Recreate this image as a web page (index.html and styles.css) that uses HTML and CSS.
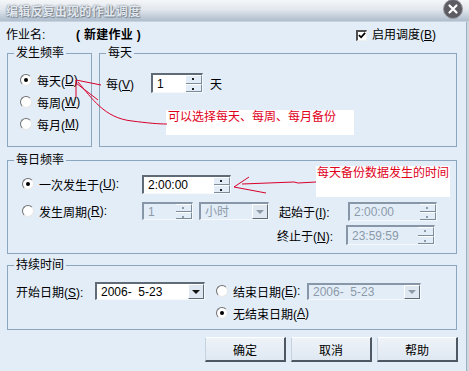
FILE: index.html
```html
<!DOCTYPE html>
<html lang="zh-CN">
<head>
<meta charset="UTF-8">
<title>编辑反复出现的作业调度</title>
<link rel="stylesheet" href="styles.css">
</head>
<body>
<div class="window">
    <div class="titlebar">
        <span class="title">编辑反复出现的作业调度</span>
        <span class="close">
            <svg width="20" height="20" viewBox="0 0 20 20">
                <circle cx="10" cy="10" r="9.5" fill="#5c5c62" stroke="#9a9aa2"/>
                <path d="M6.5 6.5 L13.5 13.5 M13.5 6.5 L6.5 13.5" stroke="#fff" stroke-width="2.2" stroke-linecap="round"/>
            </svg>
        </span>
    </div>

    <div class="name-row">
        <span>作业名:</span>
        <span class="name-value">(&nbsp;新建作业&nbsp;)</span>
        <span class="check-line">
            <span class="checkbox">
                <svg width="9" height="9" viewBox="0 0 9 9"><path d="M1 4 L3.5 6.5 L8 1.5" fill="none" stroke="#000" stroke-width="2"/></svg>
            </span>
            <span>启用调度(<u>B</u>)</span>
        </span>
    </div>

    <div class="section top-groups">
        <div class="group freq">
            <div class="group-title">发生频率</div>
            <div class="radio-list">
                <div class="radio-row"><span class="radio on"></span>每天(<u>D</u>)</div>
                <div class="radio-row"><span class="radio"></span>每周(<u>W</u>)</div>
                <div class="radio-row"><span class="radio"></span>每月(<u>M</u>)</div>
            </div>
        </div>
        <div class="group daily">
            <div class="group-title">每天</div>
            <div class="daily-row">
                <span class="every-label">每(<u>V</u>)</span>
                <div class="spin spin-day">
                    <span class="spin-val">1</span>
                    <span class="spin-btns"><i class="up"></i><i class="down"></i></span>
                </div>
                <span class="day-unit">天</span>
            </div>
        </div>
    </div>

    <div class="section group daily-freq">
        <div class="group-title">每日频率</div>
        <div class="freq-row row-a">
            <span class="radio-cell"><span class="radio on"></span>一次发生于(<u>U</u>):</span>
            <div class="spin spin-time">
                <span class="spin-val">2:00:00</span>
                <span class="spin-btns"><i class="up"></i><i class="down"></i></span>
            </div>
        </div>
        <div class="freq-row row-b">
            <span class="radio-cell"><span class="radio"></span>发生周期(<u>R</u>):</span>
            <div class="spin disabled spin-period">
                <span class="spin-val">1</span>
                <span class="spin-btns"><i class="up"></i><i class="down"></i></span>
            </div>
            <div class="combo disabled combo-unit">
                <span class="combo-val">小时</span>
                <span class="combo-btn"><i></i></span>
            </div>
            <span class="range-label">起始于(<u>I</u>):</span>
            <div class="spin disabled spin-range">
                <span class="spin-val">2:00:00</span>
                <span class="spin-btns"><i class="up"></i><i class="down"></i></span>
            </div>
        </div>
        <div class="freq-row row-c">
            <span class="range-label">终止于(<u>N</u>):</span>
            <div class="spin disabled spin-range tall">
                <span class="spin-val">23:59:59</span>
                <span class="spin-btns"><i class="up"></i><i class="down"></i></span>
            </div>
        </div>
    </div>

    <div class="section group duration">
        <div class="group-title">持续时间</div>
        <div class="dur-row">
            <span class="start-label">开始日期(<u>S</u>):</span>
            <div class="combo combo-start">
                <span class="combo-val">2006-&nbsp;&nbsp;5-23</span>
                <span class="combo-btn"><i></i></span>
            </div>
            <span class="radio-cell end-cell"><span class="radio"></span>结束日期(<u>E</u>):</span>
            <div class="combo disabled combo-end">
                <span class="combo-val">2006-&nbsp;&nbsp;5-23</span>
                <span class="combo-btn"><i></i></span>
            </div>
        </div>
        <div class="dur-row row-noend">
            <span class="radio-cell"><span class="radio on"></span>无结束日期(<u>A</u>)</span>
        </div>
    </div>

    <div class="buttons">
        <button class="btn">确定</button>
        <button class="btn">取消</button>
        <button class="btn">帮助</button>
    </div>

    <!-- red notes drawn over the dialog -->
    <div class="note note-one">可以选择每天、每周、每月备份</div>
    <div class="note note-two">每天备份数据发生的时间</div>
    <svg class="marks" width="469" height="371" viewBox="0 0 469 371">
        <g fill="none" stroke="#d8002a" stroke-width="1">
            <path d="M76 80 L76 97"/>
            <path d="M76 80 L101 85"/>
            <path d="M76 83 L98 100"/>
            <path d="M78 82 C92 98 104 118 132 121 C148 123 158 124 167 124"/>
            <path d="M234 187 L249 177"/>
            <path d="M234 187 L266 193"/>
            <path d="M242 184 L294 182 L298 183 L316 182"/>
        </g>
    </svg>
</div>
</body>
</html>
```

FILE: styles.css
```css
/* dialog look, XP style */
body {
    margin: 0;
    font-family: "Liberation Sans", "Noto Sans CJK SC", sans-serif;
    font-size: 12px;
    color: #000;
}
u {
    text-decoration: underline;
}
.window {
    position: relative;
    width: 469px;
    height: 371px;
    background: #e3edf8;
    box-shadow: inset -2px 0 #cdd6df, inset -3px 0 #9fb0c1;
    overflow: hidden;
}
.titlebar {
    height: 22px;
    display: flex;
    align-items: center;
    justify-content: space-between;
    background: linear-gradient(#f4f6f8, #e2e7ed 45%, #aebdcd);
    border-bottom: 1px solid #c8d3de;
    box-sizing: border-box;
}
.title {
    margin-left: 6px;
    font-weight: bold;
    color: #e3e8ee;
    text-shadow: 0 0 2px #5d6976, 1px 1px 1px #7f8d9b;
    letter-spacing: 0.2px;
}
.close {
    margin: -3px 6px 0 0;
    height: 20px;
}
.name-row {
    display: grid;
    grid-template-columns: 70px 280px auto;
    align-items: center;
    height: 26px;
    margin-bottom: 5px;
    padding-left: 6px;
    line-height: 14px;
}
.name-value {
    font-weight: bold;
    letter-spacing: 0.3px;
}
.check-line {
    display: flex;
    align-items: center;
    gap: 5px;
}
.checkbox {
    width: 11px;
    height: 11px;
    box-sizing: border-box;
    border-style: solid;
    border-width: 2px 1px 1px 2px;
    border-color: #4f4f4f #f0f0f0 #f0f0f0 #4f4f4f;
    background: #fff;
    display: flex;
    align-items: center;
    justify-content: center;
}
.section {
    margin-left: 7px;
    margin-right: 12px;
}
.group {
    border: 1px solid #8ca6be;
    box-sizing: border-box;
}
.group-title {
    width: fit-content;
    margin: -8px 0 0 6px;
    padding: 0 2px;
    height: 14px;
    line-height: 14px;
    background: #e3edf8;
}
.top-groups {
    display: flex;
    gap: 7px;
}
.freq {
    width: 85px;
    height: 94px;
}
.daily {
    width: 358px;
    height: 94px;
}
.radio-list {
    margin-top: 9px;
    padding-left: 12px;
}
.radio-row {
    height: 22px;
    display: flex;
    align-items: center;
}
.radio {
    position: relative;
    width: 12px;
    height: 12px;
    box-sizing: border-box;
    border-radius: 50%;
    border: 1px solid;
    border-color: #6f6f6f #e6e6e6 #e6e6e6 #6f6f6f;
    background: #fff;
    margin-right: 5px;
    flex: none;
}
.radio.on::after {
    content: "";
    position: absolute;
    left: 3px;
    top: 3px;
    width: 4px;
    height: 4px;
    border-radius: 50%;
    background: #000;
}
.daily-row {
    display: flex;
    align-items: center;
    height: 20px;
    margin-top: 13px;
    padding-left: 6px;
}
.every-label {
    width: 45px;
    flex: none;
}
.spin-day {
    width: 52px;
    height: 20px;
}
.day-unit {
    margin-left: 7px;
}

/* spin and combo fields */
.spin, .combo {
    display: flex;
    flex: none;
    box-sizing: border-box;
    background: #fff;
    border-style: solid;
    border-width: 2px 1px 1px 2px;
    border-color: #5f6b77 #f6f9fc #f6f9fc #5f6b77;
    line-height: 14px;
}
.spin-val, .combo-val {
    flex: 1;
    padding-left: 4px;
    display: flex;
    align-items: center;
    white-space: nowrap;
}
.spin-btns {
    width: 16px;
    display: flex;
    flex-direction: column;
    background: #e3edf8;
}
.spin-btns i {
    flex: 1;
    position: relative;
    border-bottom: 1px solid #7d8c9b;
    border-right: 1px solid #7d8c9b;
    border-top: 1px solid #fff;
}
.spin-btns i::after {
    content: "";
    position: absolute;
    left: 6px;
    top: 2px;
    width: 2px;
    height: 2px;
    background: #222;
}
.spin-btns .down::after {
    top: 3px;
}
.combo-btn {
    width: 16px;
    display: flex;
    align-items: center;
    justify-content: center;
    background: #dfe8f1;
    border-style: solid;
    border-width: 1px;
    border-color: #fff #5f6b77 #5f6b77 #fff;
    box-sizing: border-box;
}
.combo-btn i {
    width: 0;
    height: 0;
    border-left: 4px solid transparent;
    border-right: 4px solid transparent;
    border-top: 4px solid #111;
}
.disabled {
    background: #e3edf8;
    color: #8c9aa8;
    border-color: #8797a7 #f6f9fc #f6f9fc #8797a7;
}
.disabled .spin-btns i::after {
    background: #8c9aa8;
}
.disabled .combo-btn i {
    border-top-color: #8c9aa8;
}

/* daily frequency group */
.daily-freq {
    margin-top: 13px;
    height: 94px;
}
.freq-row {
    display: flex;
    align-items: center;
    height: 20px;
    padding-left: 14px;
}
.row-a {
    margin-top: 7px;
}
.row-b {
    margin-top: 7px;
}
.row-c {
    margin-top: 4px;
    padding-left: 269px;
}
.radio-cell {
    display: flex;
    align-items: center;
    width: 120px;
    flex: none;
}
.spin-time {
    width: 89px;
    height: 19px;
}
.spin-period {
    width: 51px;
    height: 18px;
}
.combo-unit {
    width: 70px;
    height: 18px;
    margin-left: 6px;
}
.range-label {
    width: 69px;
    flex: none;
}
.combo-unit + .range-label {
    margin-left: 10px;
}
.spin-range {
    width: 89px;
    height: 19px;
}
.spin-range.tall {
    height: 20px;
}

/* duration group */
.duration {
    margin-top: 11px;
    height: 65px;
}
.dur-row {
    display: flex;
    align-items: center;
    height: 20px;
    padding-left: 8px;
}
.duration .group-title + .dur-row {
    margin-top: 9px;
}
.start-label {
    width: 79px;
    flex: none;
}
.combo-start {
    width: 110px;
    height: 18px;
}
.end-cell {
    width: 91px;
    margin-left: 11px;
}
.combo-end {
    width: 114px;
    height: 17px;
}
.row-noend {
    margin-top: 2px;
    padding-left: 208px;
}

.buttons {
    display: flex;
    justify-content: flex-end;
    gap: 5px;
    margin: 7px 11px 0 0;
}
.btn {
    width: 81px;
    height: 25px;
    font: inherit;
    color: #000;
    background: linear-gradient(#eef3f8, #dfe8f2);
    border-style: solid;
    border-width: 1px 2px 2px 1px;
    border-color: #fdfeff #4e5864 #4e5864 #c6d2de;
    padding: 0;
}

/* red annotations */
.note {
    position: absolute;
    background: #fff;
    color: #e0001b;
    line-height: 14px;
    padding-left: 2px;
    box-sizing: border-box;
}
.note-one {
    left: 166px;
    top: 110px;
    width: 188px;
    height: 25px;
}
.note-two {
    left: 316px;
    top: 166px;
    width: 134px;
    height: 31px;
    padding-left: 1px;
}
.marks {
    position: absolute;
    left: 0;
    top: 0;
    pointer-events: none;
}
```
